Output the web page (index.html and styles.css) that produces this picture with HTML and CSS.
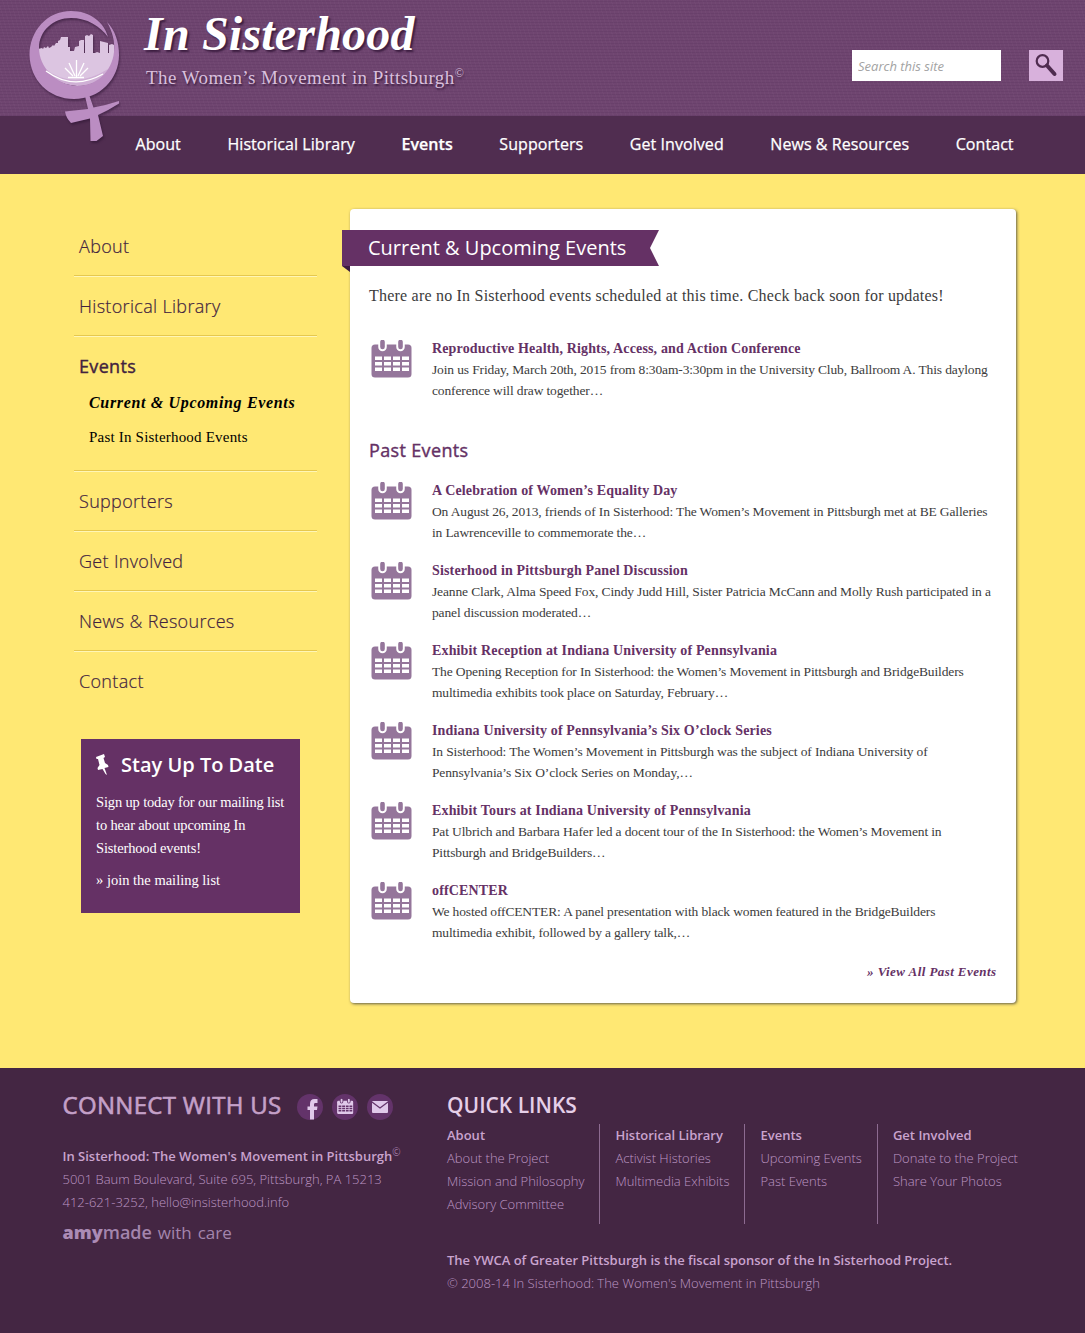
FILE: index.html
```html
<!DOCTYPE html>
<html lang="en">
<head>
<meta charset="utf-8">
<title>Current &amp; Upcoming Events | In Sisterhood</title>
<link rel="stylesheet" href="styles.css">
</head>
<body>
<svg width="0" height="0" class="defs">
  <symbol id="cal" viewBox="0 0 42 40">
    <path fill="currentColor" d="M5 4.500H38Q41.500 4.500 41.500 8V34Q41.500 37.500 38 37.500H5Q1.500 37.500 1.500 34V8Q1.500 4.500 5 4.500Z"/>
    <path stroke="var(--hole)" stroke-width="8.500" stroke-linecap="round" d="M12.500 3V7M30.500 3V7"/>
    <path stroke="currentColor" stroke-width="4.600" stroke-linecap="round" d="M12.500 2V7M30.500 2V7"/>
    <path stroke="var(--hole)" stroke-width="3.600" stroke-dasharray="7 2" d="M5 18.300H39M5 23.800H39M5 29.300H39"/>
  </symbol>
</svg>
<header class="header">
  <div class="banner">
    <svg class="logo" width="110" height="145" viewBox="0 0 110 145">
      <path fill="#dcc5e1" d="M18 49L22 48L23 49L24 47L26 48L28 46L29 48L31 47L33 45L34 46L36 43L38 43V41L40 40L41 37H48V47H50V51H54L55 47L59 46V41L61 40H64V53H65V36L67 35L69 36L71 34L73 35V53H75L77 52L80 53V41L84 42L88 43V53H89V45L92 44L94 45Q97 66 84 77Q67 90 45 83Q18 73 18 49Z"/>
      <path fill="#cfafd5" d="M24 68Q53 91 88 69Q78 86 57 86Q34 84 24 68Z"/>
      <path fill="#bb8dc2" d="M88 37C84 22 70 11 51 11C27 11 9.500 31 9.500 55C10 80 29 99 54 99C80 99 99 79 99 55C99 42 95 30 87 22C93 33 95 42 94 52C92 72 76 86 57 86C36 85 19 67 19 48C19 31 33 18 51 18C67 18 80 26 88 37Z"/>
      <path fill="none" stroke="#fff" stroke-width="1.300" d="M26 71Q53 91 83 74M48 77.500H64M56.500 77V60M55 76L49 63M58 76L64 63M53 76L45 68M60 76L68 68"/>
      <path fill="#bb8dc2" d="M65 96H69.500L73.500 107.500Q87 105 99 101V103.500Q89 110 78 115L83 136L76.500 141H70.500L70 118.500L51 123Q46 118 45 111.500L68 109Z"/>
    </svg>
    <div class="brand">
      <div class="brand-name">In Sisterhood</div>
      <div class="tagline">The Women’s Movement in Pittsburgh<sup>©</sup></div>
    </div>
    <form class="search">
      <input type="text" placeholder="Search this site">
      <button type="button" aria-label="Search"><svg width="34" height="31" viewBox="0 0 34 31"><circle cx="13.500" cy="11" r="5.800" fill="none" stroke="#4f2c50" stroke-width="2.200"/><path d="M18 15.500L25.500 24" stroke="#4f2c50" stroke-width="4" stroke-linecap="round"/></svg></button>
    </form>
  </div>
  <nav class="nav"><a>About</a><a>Historical Library</a><a class="on">Events</a><a>Supporters</a><a>Get Involved</a><a>News &amp; Resources</a><a>Contact</a></nav>
</header>
<main class="main">
  <aside class="side">
    <ul class="menu">
      <li>About</li>
      <li>Historical Library</li>
      <li><b>Events</b>
        <ul class="submenu"><li class="now">Current &amp; Upcoming Events</li><li>Past In Sisterhood Events</li></ul>
      </li>
      <li>Supporters</li>
      <li>Get Involved</li>
      <li>News &amp; Resources</li>
      <li>Contact</li>
    </ul>
    <section class="signup">
      <h3><svg width="13" height="22" viewBox="0 0 13 22"><path fill="#fff" d="M0 3L8 0L9 3L7.500 4L9 9L12 11L12.500 13L8.500 14L11 21L9.500 20L6.500 15L2 16L1.500 14L3.500 11L2 5L.5 5Z"/></svg>Stay Up To Date</h3>
      <p>Sign up today for our mailing list<br>to hear about upcoming In<br>Sisterhood events!</p>
      <p class="join">» join the mailing list</p>
    </section>
  </aside>
  <article class="card">
    <h1 class="ribbon">Current &amp; Upcoming Events</h1>
    <p class="intro">There are no In Sisterhood events scheduled at this time. Check back soon for updates!</p>
    <div class="event"><svg><use href="#cal"/></svg><div><h4>Reproductive Health, Rights, Access, and Action Conference</h4><p>Join us Friday, March 20th, 2015 from 8:30am-3:30pm in the University Club, Ballroom A. This daylong<br>conference will draw together…</p></div></div>
    <h2>Past Events</h2>
    <div class="event"><svg><use href="#cal"/></svg><div><h4>A Celebration of Women’s Equality Day</h4><p>On August 26, 2013, friends of In Sisterhood: The Women’s Movement in Pittsburgh met at BE Galleries<br>in Lawrenceville to commemorate the…</p></div></div>
    <div class="event"><svg><use href="#cal"/></svg><div><h4>Sisterhood in Pittsburgh Panel Discussion</h4><p>Jeanne Clark, Alma Speed Fox, Cindy Judd Hill, Sister Patricia McCann and Molly Rush participated in a<br>panel discussion moderated…</p></div></div>
    <div class="event"><svg><use href="#cal"/></svg><div><h4>Exhibit Reception at Indiana University of Pennsylvania</h4><p>The Opening Reception for In Sisterhood: the Women’s Movement in Pittsburgh and BridgeBuilders<br>multimedia exhibits took place on Saturday, February…</p></div></div>
    <div class="event"><svg><use href="#cal"/></svg><div><h4>Indiana University of Pennsylvania’s Six O’clock Series</h4><p>In Sisterhood: The Women’s Movement in Pittsburgh was the subject of Indiana University of<br>Pennsylvania’s Six O’clock Series on Monday,…</p></div></div>
    <div class="event"><svg><use href="#cal"/></svg><div><h4>Exhibit Tours at Indiana University of Pennsylvania</h4><p>Pat Ulbrich and Barbara Hafer led a docent tour of the In Sisterhood: the Women’s Movement in<br>Pittsburgh and BridgeBuilders…</p></div></div>
    <div class="event"><svg><use href="#cal"/></svg><div><h4>offCENTER</h4><p>We hosted offCENTER: A panel presentation with black women featured in the BridgeBuilders<br>multimedia exhibit, followed by a gallery talk,…</p></div></div>
    <p class="more">» View All Past Events</p>
  </article>
</main>
<footer class="footer">
  <section class="connect">
    <h2>CONNECT WITH US
      <svg width="26" height="26" viewBox="0 0 26 26"><circle cx="13" cy="13" r="13" fill="#63336a"/><path fill="#e0c9ea" d="M20.500 5V9H18Q17 9 17 10.500V12.500H20.500L20 16H17V25.500H13V16H10.500V12.500H13V10Q13 5 17.500 5Z"/></svg>
      <svg class="mini" width="26" height="26" viewBox="0 0 26 26"><circle cx="13" cy="13" r="13" fill="#63336a"/><use href="#cal" x="4.500" y="4.500" width="17" height="17"/></svg>
      <svg width="26" height="26" viewBox="0 0 26 26"><circle cx="13" cy="13" r="13" fill="#63336a"/><rect x="5" y="7" width="16" height="12" rx="1" fill="#e0c9ea"/><path d="M5 8L13 14L21 8" fill="none" stroke="#63336a" stroke-width="1.200"/></svg>
    </h2>
    <p><b>In Sisterhood: The Women's Movement in Pittsburgh</b><sup>©</sup></p>
    <p>5001 Baum Boulevard, Suite 695, Pittsburgh, PA 15213</p>
    <p>412-621-3252, hello@insisterhood.info</p>
    <p class="credit"><b>amy</b><i>made</i> with care</p>
  </section>
  <section class="links">
    <h2>QUICK LINKS</h2>
    <div class="cols">
      <div><b>About</b><a>About the Project</a><a>Mission and Philosophy</a><a>Advisory Committee</a></div>
      <div><b>Historical Library</b><a>Activist Histories</a><a>Multimedia Exhibits</a></div>
      <div><b>Events</b><a>Upcoming Events</a><a>Past Events</a></div>
      <div><b>Get Involved</b><a>Donate to the Project</a><a>Share Your Photos</a></div>
    </div>
    <p><b>The YWCA of Greater Pittsburgh is the fiscal sponsor of the In Sisterhood Project.</b></p>
    <p>© 2008-14 In Sisterhood: The Women's Movement in Pittsburgh</p>
  </section>
</footer>
</body>
</html>
```
FILE: styles.css
```css
* { box-sizing: border-box; }
body { margin: 0; background: #442643; font-family: "Open Sans", sans-serif; }
h1, h2, h3, h4, p, ul { margin: 0; padding: 0; }
ul { list-style: none; }
sup { line-height: 0; }
.defs { display: block; position: absolute; }

.header { color: #fff; }
.banner {
  height: 116px; display: flex; padding-left: 20px; background-color: #6f4570;
  background-image:
    repeating-linear-gradient(0deg, rgba(50,20,60,.1) 0 1px, transparent 1px 3px),
    repeating-linear-gradient(75deg, rgba(255,255,255,.025) 0 1px, transparent 1px 4px);
}
.logo { flex: none; position: relative; filter: drop-shadow(1px 2px 1px rgba(40,15,45,.5)); }
.brand { flex: 1; padding: 9px 0 0 14px; white-space: nowrap; }
.brand-name { font: italic bold 48px/50px "Brush Script MT", "Liberation Serif", serif; letter-spacing: .2px; text-shadow: 2px 2px 2px #3c1d40; }
.tagline { font: 19px/22px "Liberation Serif", serif; letter-spacing: .42px; color: #d9c0dd; margin: 8px 0 0 2px; text-shadow: 1px 2px 2px #3c1d40; }
.tagline sup { font-size: 12px; }
.search { display: flex; gap: 28px; padding: 50px 22px 0 0; }
.search input { width: 149px; height: 31px; border: 0; padding: 0 6px; font: italic 13px "Open Sans", sans-serif; }
.search input::placeholder { color: #a3a3a3; }
.search button { width: 34px; height: 31px; border: 0; padding: 0; background: #d8b1dc; }
.search svg { display: block; }
.nav { height: 58px; background: #502d50; display: flex; gap: 46.500px; padding-left: 135.500px; font-size: 16px; line-height: 56px; white-space: nowrap; letter-spacing: .07px; -webkit-text-stroke: .25px #fff; }
.nav .on { font-weight: 600; }

.main { height: 894px; background: #ffe873; display: flex; padding: 35px 0 0 74px; }
.side { width: 243px; margin-right: 33px; padding-top: 8px; }
.menu > li { font-size: 18px; font-weight: 300; line-height: 58px; color: #42233f; padding-left: 5px; border-bottom: 1px solid #fff6b5; box-shadow: inset 0 -1px #e6c84e; padding-bottom: 1px; letter-spacing: .32px; -webkit-text-stroke: .2px; }
.menu > li:last-child { border: 0; box-shadow: none; }
.menu b { font-weight: 400; display: block; -webkit-text-stroke: .4px #42233f; }
.submenu { padding: 0 0 16px 10px; margin-top: -9px; font: 15px/34px "Liberation Serif", serif; color: #000; letter-spacing: .2px; white-space: nowrap; -webkit-text-stroke: 0; }
.submenu .now { font-weight: bold; font-style: italic; font-size: 16px; letter-spacing: .66px; }
.signup { margin: 28px 0 0 7px; width: 219px; height: 174px; background: #653165; color: #fff; padding: 12px 15px; font: 14.500px/23px "Liberation Serif", serif; letter-spacing: -.15px; white-space: nowrap; }
.signup h3 { font: 600 20px/28px "Open Sans", sans-serif; letter-spacing: 0; display: flex; gap: 12px; align-items: center; margin-bottom: 12px; }
.signup .join { margin-top: 9px; letter-spacing: 0; }

.card { width: 665.500px; height: 794px; background: #fff; border-radius: 4px; box-shadow: 1px 1px 3px rgba(60,60,60,.8); padding: 21px 19px 0; font: 13.500px/21px "Liberation Serif", serif; color: #3c3c3c; white-space: nowrap; }
.ribbon { position: relative; width: 317px; height: 36px; margin-left: -27px; padding-left: 26px; color: #fff; background: #653165; font: 400 20px/35px "Open Sans", sans-serif; clip-path: polygon(0 0,100% 0,308px 18px,100% 100%,8px 36px,8px 42px,0 36px); }
.ribbon::after { content: ""; position: absolute; left: 0; top: 36px; width: 8px; height: 6px; background: #3d1c40; }
.intro { font-size: 16px; letter-spacing: .21px; margin: 19px 0 32px; }
.event { display: flex; gap: 20px; height: 80px; padding-left: 1px; }
.event svg { flex: none; width: 42px; height: 40px; color: #95769b; --hole: #fff; margin-top: 2px; }
.event h4 { font-size: 14px; color: #653165; letter-spacing: .15px; }
.event p { letter-spacing: -.135px; }
.card h2 { font: 400 18px/26px "Open Sans", sans-serif; letter-spacing: .35px; -webkit-text-stroke: .4px; color: #653165; margin: 19px 0 17px; }
.more { text-align: right; font-weight: bold; font-style: italic; font-size: 13px; letter-spacing: .42px; color: #653165; margin-top: 1px; }

.footer { height: 265px; color: #bd96c3; display: flex; padding: 0 0 0 62.500px; font-size: 13px; font-weight: 300; line-height: 23px; white-space: nowrap; }
.footer b { font-weight: 600; color: #c9a3ce; }
.connect { width: 384.500px; padding-top: 20px; }
.connect h2 { font-size: 24px; font-weight: 400; letter-spacing: .3px; -webkit-text-stroke: .6px; line-height: 34px; display: flex; align-items: center; gap: 9px; margin-bottom: 23px; color: #c4a0c8; }
.connect h2 svg { position: relative; top: 2px; -webkit-text-stroke: 0; }
.connect h2 svg:first-of-type { margin-left: 6px; }
.mini { color: #e0c9ea; --hole: #63336a; }
.connect sup { font-size: 10px; }
.credit { font: 400 17px/25px "Open Sans", sans-serif; color: #a385ad; margin-top: 6px; word-spacing: 1.500px; }
.footer .credit i { font-style: normal; font-weight: 600; font-size: 18px; }
.footer .credit b { color: #ab8bb5; font-weight: 800; font-size: 18px; }
.links { padding-top: 22px; }
.links h2 { font-size: 21px; font-weight: 600; line-height: 30px; color: #e5cfe8; margin-bottom: 4px; }
.cols { display: flex; height: 100px; margin-bottom: 25px; }
.cols div { display: flex; flex-direction: column; padding: 0 15px; border-left: 1px solid #8d6b91; }
.cols div:first-child { padding-left: 0; border: 0; }
```
